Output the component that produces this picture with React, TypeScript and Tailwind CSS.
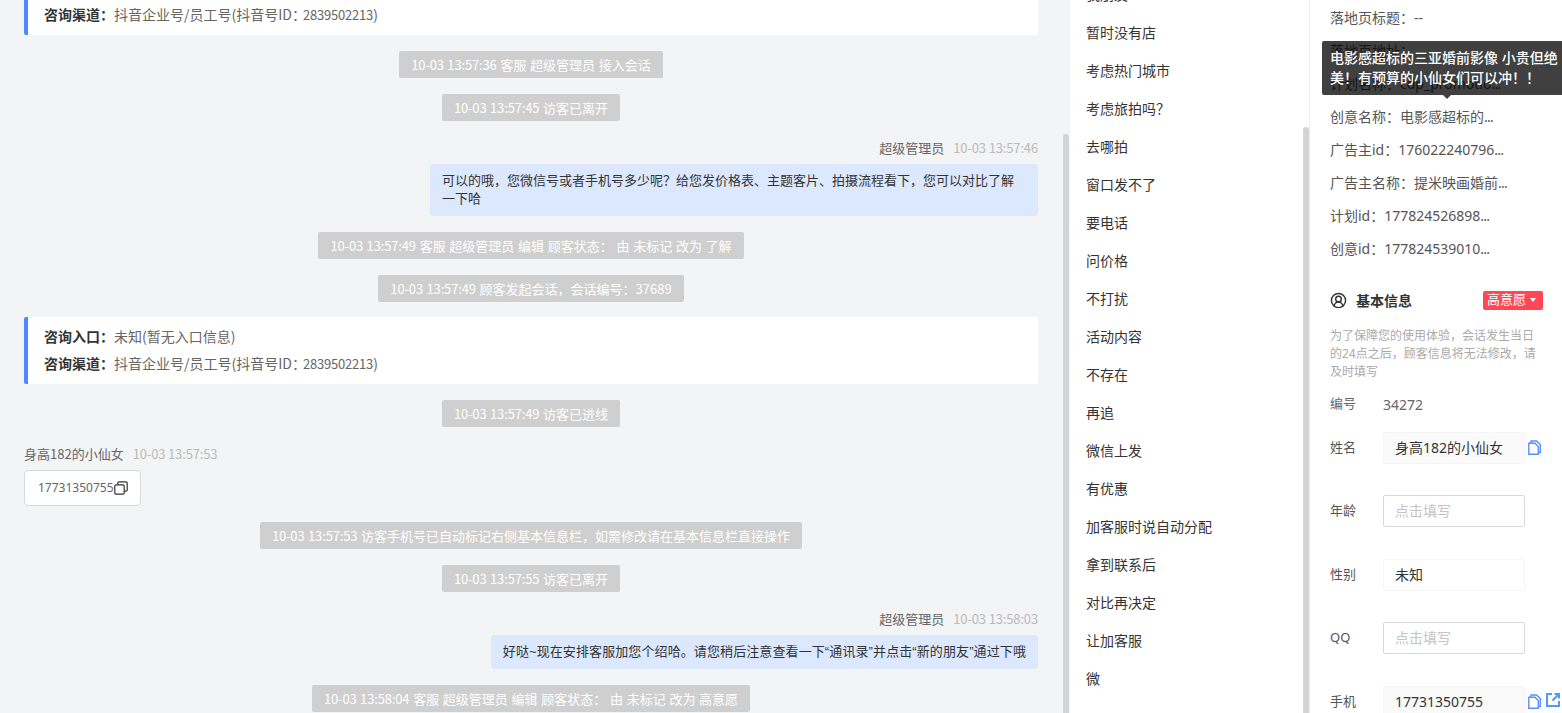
import React from "react";
import { CircleUserRound } from "lucide-react";

const shortcuts = [
  "暂时没有店",
  "考虑热门城市",
  "考虑旅拍吗？",
  "去哪拍",
  "窗口发不了",
  "要电话",
  "问价格",
  "不打扰",
  "活动内容",
  "不存在",
  "再追",
  "微信上发",
  "有优惠",
  "加客服时说自动分配",
  "拿到联系后",
  "对比再决定",
  "让加客服",
  "微",
];

const adInfo = [
  { text: "落地页标题：--" },
  { text: "落地页地址：" },
  { text: "计划名称：cdp_promotio", cut: true },
  { text: "创意名称：电影感超标的", cut: true },
  { text: "广告主id：176022240796", cut: true },
  { text: "广告主名称：提米映画婚前", cut: true },
  { text: "计划id：177824526898", cut: true },
  { text: "创意id：177824539010", cut: true },
];

const Notice = ({ time, children }: { time: string; children: React.ReactNode }) => (
  <div className="flex justify-center">
    <div className="h-[27px] rounded-[2px] bg-[#cfcfcf] px-3 text-[13px] leading-[27px] whitespace-nowrap text-white [word-spacing:0.8px]">
      <span className="tracking-[-0.15px]">{time}</span> {children}
    </div>
  </div>
);

const EntryCard = ({ onlyChannel }: { onlyChannel?: boolean }) => (
  <div className="flex flex-col justify-end gap-[5px] rounded-[2px] border-l-[4px] border-[#4d88ff] bg-white px-4 pt-[8px] pb-[10px] text-[14px] leading-[22px] text-[#666]">
    {!onlyChannel && (
      <div>
        <span className="font-bold text-[#333]">咨询入口：</span>未知(暂无入口信息)
      </div>
    )}
    <div>
      <span className="font-bold text-[#333]">咨询渠道：</span>抖音企业号/员工号(抖音号ID：<span className="-ml-[3px] text-[13px] leading-none tracking-[-0.2px]">2839502213</span>)
    </div>
  </div>
);

const SenderLine = ({ name, time, right }: { name: string; time: string; right?: boolean }) => (
  <div className={`-mb-[11px] flex h-[22px] items-center gap-[9px] text-[13px] ${right ? "justify-end" : ""}`}>
    <span className="text-[#666]">{name}</span>
    <span className="tracking-[-0.15px] text-[#bbb]">{time}</span>
  </div>
);

const Bubble = ({ children, wide }: { children: React.ReactNode; wide?: boolean }) => (
  <div className="flex justify-end">
    <div
      className={`max-w-[608px] rounded-[4px] bg-[#dce8fe] px-3 py-2 font-['Liberation_Sans','Noto_Sans_CJK_SC',sans-serif] text-[13px] leading-[18px] text-[#333] ${
        wide ? "tracking-[0.1px]" : ""
      }`}
    >
      {children}
    </div>
  </div>
);

const CopyDoc = () => (
  <svg viewBox="0 0 13 15" className="h-[15px] w-[13px] shrink-0" fill="none" stroke="#5b8ff9" strokeWidth="1.4">
    <path d="M3 3V1h5.500L12.300 4.500V12.500h-2" />
    <path d="M0.800 3.200h6.200l3.300 3.300V14.300H0.800z" fill="#fff" />
  </svg>
);

const ExternalIcon = () => (
  <svg viewBox="0 0 14 14" className="-mt-1 h-[14px] w-[14px] shrink-0" fill="none" stroke="#4d9bff" strokeWidth="2">
    <path d="M6 1H1v12h12V8" />
    <path d="M6.500 7.500L13 1M8.500 1H13v4.500" />
  </svg>
);

const CopyDark = () => (
  <svg viewBox="0 0 14 14" className="h-[14px] w-[14px] shrink-0" fill="none" stroke="#333" strokeWidth="1.2">
    <rect x="3.800" y="0.800" width="9.400" height="9.400" rx="1.200" />
    <rect x="0.800" y="3.800" width="9.400" height="9.400" rx="1.200" fill="#fff" />
  </svg>
);

const Field = ({
  label,
  value,
  placeholder,
  variant,
  icons,
}: {
  label: string;
  value?: string;
  placeholder?: string;
  variant: "filled" | "plain" | "empty";
  icons?: React.ReactNode;
}) => (
  <div className="mb-[31.5px] flex h-[32px] items-center">
    <span className="w-[53px] shrink-0 text-[13px] text-[#555]">{label}</span>
    <div
      className={`h-[32px] w-[142px] shrink-0 rounded-[2px] border px-[11px] text-[14px] leading-[30px] ${
        variant === "filled"
          ? "border-[#f5f5f5] bg-[#fafafa] text-[#333]"
          : variant === "plain"
            ? "border-[#f5f5f5] bg-white text-[#333]"
            : "border-[#d9d9d9] bg-white text-[#c4c4c4]"
      }`}
    >
      {value ?? placeholder}
    </div>
    {icons && <div className="ml-[3px] flex items-center gap-[5px]">{icons}</div>}
  </div>
);

export default function App() {
  return (
    <div className="flex h-[713px] w-[1562px] overflow-hidden bg-white font-['Noto_Sans_CJK_SC',sans-serif]">
      {/* chat column */}
      <div className="relative w-[1070px] shrink-0 overflow-hidden bg-[#f3f4f6]">
        <div className="flex w-[1063px] flex-col gap-4 pr-[25px] pl-6">
          <div className="-mt-[5px]">
            <EntryCard onlyChannel />
          </div>
          <Notice time="10-03 13:57:36">客服 超级管理员 接入会话</Notice>
          <Notice time="10-03 13:57:45">访客已离开</Notice>
          <SenderLine right name="超级管理员" time="10-03 13:57:46" />
          <Bubble>可以的哦，您微信号或者手机号多少呢？给您发价格表、主题客片、拍摄流程看下，您可以对比了解一下哈</Bubble>
          <Notice time="10-03 13:57:49">客服 超级管理员 编辑 顾客状态： 由 未标记 改为 了解</Notice>
          <Notice time="10-03 13:57:49">顾客发起会话，会话编号：37689</Notice>
          <div className="-mt-px">
            <EntryCard />
          </div>
          <Notice time="10-03 13:57:49">访客已进线</Notice>
          <SenderLine name="身高182的小仙女" time="10-03 13:57:53" />
          <div className="flex">
            <div className="flex h-[36px] w-[117px] items-center rounded-[4px] border border-[#d9d9d9] bg-white pl-[13px] font-['Noto_Sans','Noto_Sans_CJK_SC',sans-serif] text-[12px] text-[#666]">
              17731350755
              <CopyDark />
            </div>
          </div>
          <Notice time="10-03 13:57:53">访客手机号已自动标记右侧基本信息栏，如需修改请在基本信息栏直接操作</Notice>
          <Notice time="10-03 13:57:55">访客已离开</Notice>
          <SenderLine right name="超级管理员" time="10-03 13:58:03" />
          <Bubble wide>好哒~现在安排客服加您个绍哈。请您稍后注意查看一下“通讯录”并点击“新的朋友”通过下哦</Bubble>
          <Notice time="10-03 13:58:04">客服 超级管理员 编辑 顾客状态： 由 未标记 改为 高意愿</Notice>
        </div>
        <div className="absolute top-[134px] right-[1px] bottom-0 w-[6px] rounded-t-[3px] bg-[#d4d4d4]" />
      </div>

      {/* shortcut list */}
      <div className="relative w-[239px] shrink-0 overflow-hidden bg-white pl-4">
        <div className="-mt-[25px] text-[14px] leading-[38px] text-[#333]">
          <div>我朋友</div>
          {shortcuts.map((s) => (
            <div key={s}>{s}</div>
          ))}
        </div>
        <div className="absolute top-[127px] right-0 bottom-0 w-[6px] rounded-t-[3px] bg-[#d4d4d4]" />
      </div>

      {/* customer panel */}
      <div className="relative flex-1 overflow-hidden border-l border-[#eee] bg-white pl-5 font-['Noto_Sans','Noto_Sans_CJK_SC',sans-serif]">
        <div className="pt-[1px] text-[14px] leading-[33px] text-[#555]">
          {adInfo.map((row) => (
            <div key={row.text}>
              {row.text}
              {row.cut && <span className="tracking-[-0.8px]">...</span>}
            </div>
          ))}
        </div>
        <div className="mt-[25px] flex h-5 w-[213px] items-center">
          <CircleUserRound size={17} strokeWidth={2} color="#333" />
          <span className="ml-[9px] text-[14px] font-bold text-[#333]">基本信息</span>
          <div className="ml-auto flex h-[19px] w-[60px] items-center gap-[4px] rounded-[2px] bg-[#ff4757] pl-1 text-[13px] text-white">
            高意愿
            <span className="h-0 w-0 border-x-[3.5px] border-t-[4px] border-x-transparent border-t-white" />
          </div>
        </div>
        <div className="mt-[17px] w-[208px] text-[12px] leading-[18px] text-[#aaa]">
          为了保障您的使用体验，会话发生当日的24点之后，顾客信息将无法修改，请及时填写
        </div>
        <div className="mt-[13px] mb-[17.5px] flex h-5 items-center text-[#666]">
          <span className="w-[53px] text-[13px]">编号</span>
          <span className="text-[14px]">34272</span>
        </div>
        <Field label="姓名" value="身高182的小仙女" variant="filled" icons={<CopyDoc />} />
        <Field label="年龄" placeholder="点击填写" variant="empty" />
        <Field label="性别" value="未知" variant="plain" />
        <Field label="QQ" placeholder="点击填写" variant="empty" />
        <Field
          label="手机"
          value="17731350755"
          variant="filled"
          icons={
            <>
              <CopyDoc />
              <ExternalIcon />
            </>
          }
        />

        {/* tooltip over 落地页地址 */}
        <div className="absolute top-[41px] left-[12px] w-[250px] rounded-[2px] bg-[rgba(0,0,0,0.75)] px-2 py-[7px] text-[14px] leading-[20px] font-medium text-white">
          电影感超标的三亚婚前影像 小贵但绝美！有预算的小仙女们可以冲！！
          <span className="absolute top-full left-[121px] h-0 w-0 border-x-[4px] border-t-[4px] border-x-transparent border-t-[rgba(0,0,0,0.75)]" />
        </div>
      </div>
    </div>
  );
}
